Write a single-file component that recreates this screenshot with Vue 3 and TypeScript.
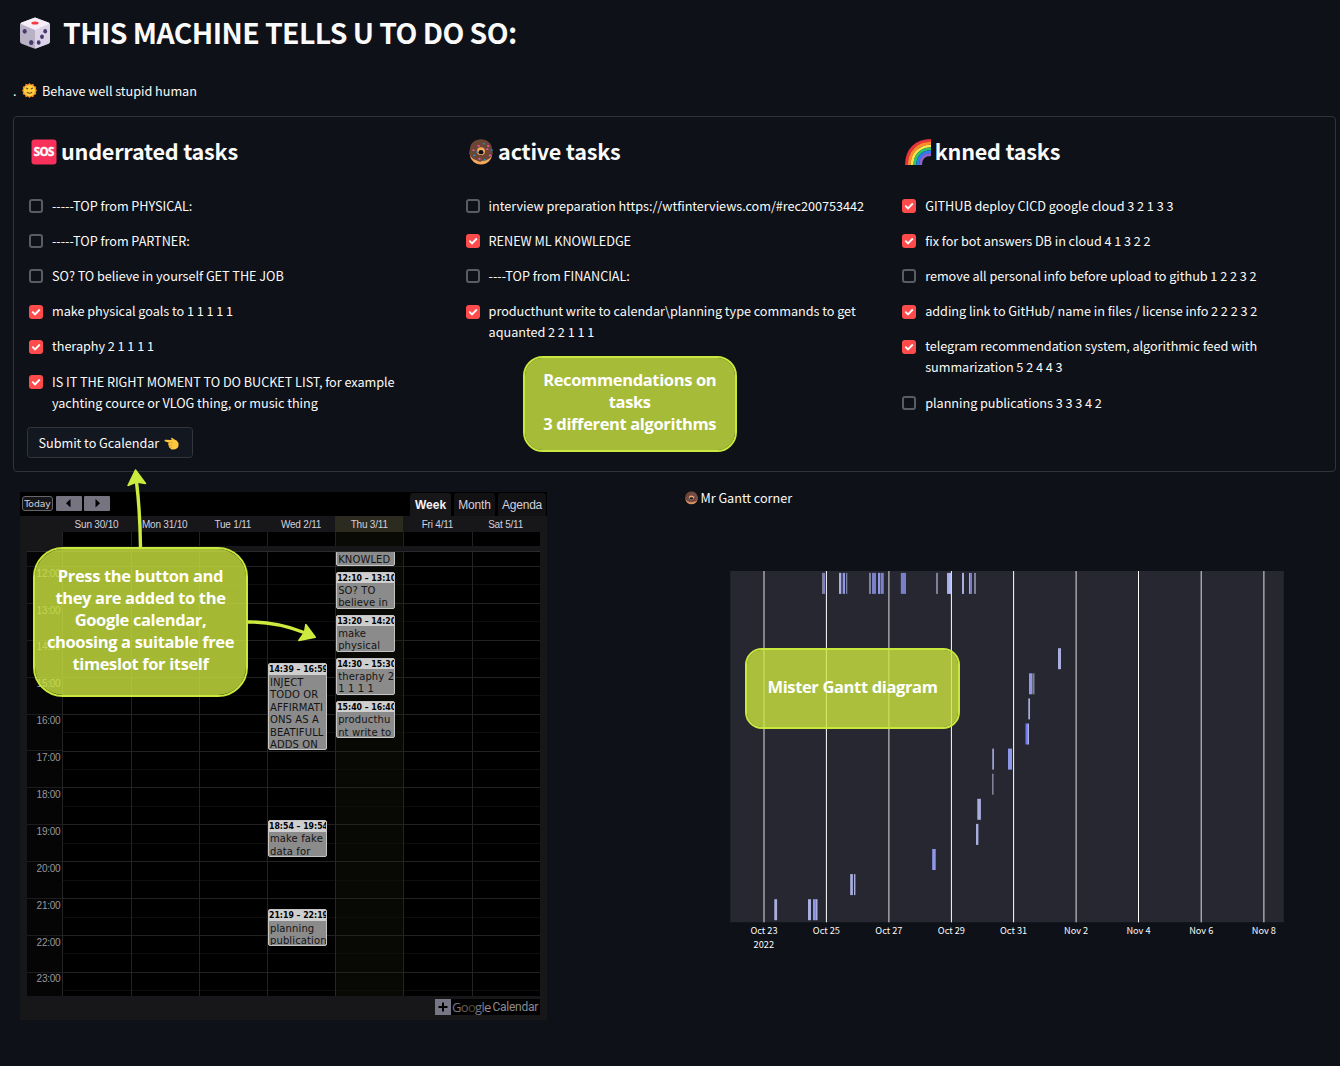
<script setup lang="ts">
interface Task { text: string; done: boolean }
interface Column { icon: 'sos' | 'donut' | 'rainbow'; title: string; tasks: Task[] }
interface CalEvent { start: number; end: number; time: string; title: string }
interface Day { label: string; today?: boolean; events: CalEvent[] }

const columns: Column[] = [
  {
    icon: 'sos',
    title: 'underrated tasks',
    tasks: [
      { text: '-----TOP from PHYSICAL:', done: false },
      { text: '-----TOP from PARTNER:', done: false },
      { text: 'SO? TO believe in yourself GET THE JOB', done: false },
      { text: 'make physical goals to 1 1 1 1 1', done: true },
      { text: 'theraphy 2 1 1 1 1', done: true },
      { text: 'IS IT THE RIGHT MOMENT TO DO BUCKET LIST, for example\nyachting cource or VLOG thing, or music thing', done: true },
    ],
  },
  {
    icon: 'donut',
    title: 'active tasks',
    tasks: [
      { text: 'interview preparation https://wtfinterviews.com/#rec200753442', done: false },
      { text: 'RENEW ML KNOWLEDGE', done: true },
      { text: '----TOP from FINANCIAL:', done: false },
      { text: 'producthunt write to calendar\\planning type commands to get\naquanted 2 2 1 1 1', done: true },
    ],
  },
  {
    icon: 'rainbow',
    title: 'knned tasks',
    tasks: [
      { text: 'GITHUB deploy CICD google cloud 3 2 1 3 3', done: true },
      { text: 'fix for bot answers DB in cloud 4 1 3 2 2', done: true },
      { text: 'remove all personal info before upload to github 1 2 2 3 2', done: false },
      { text: 'adding link to GitHub/ name in files / license info 2 2 2 3 2', done: true },
      { text: 'telegram recommendation system, algorithmic feed with\nsummarization 5 2 4 4 3', done: true },
      { text: 'planning publications 3 3 3 4 2', done: false },
    ],
  },
]

// Event times are minutes since midnight
const days: Day[] = [
  { label: 'Sun 30/10', events: [] },
  { label: 'Mon 31/10', events: [] },
  { label: 'Tue 1/11', events: [] },
  {
    label: 'Wed 2/11',
    events: [
      { start: 879, end: 1019, time: '14:39 – 16:59', title: 'INJECT\nTODO OR\nAFFIRMATI\nONS AS A\nBEATIFULL\nADDS ON' },
      { start: 1134, end: 1194, time: '18:54 – 19:54', title: 'make fake\ndata for' },
      { start: 1279, end: 1339, time: '21:19 – 22:19', title: 'planning\npublication' },
    ],
  },
  {
    label: 'Thu 3/11',
    today: true,
    events: [
      { start: 696, end: 720, time: '', title: 'KNOWLED' },
      { start: 730, end: 790, time: '12:10 – 13:10', title: 'SO? TO\nbelieve in' },
      { start: 800, end: 860, time: '13:20 – 14:20', title: 'make\nphysical' },
      { start: 870, end: 930, time: '14:30 – 15:30', title: 'theraphy 2\n1 1 1 1' },
      { start: 940, end: 1000, time: '15:40 – 16:40', title: 'producthu\nnt write to' },
    ],
  },
  { label: 'Fri 4/11', events: [] },
  { label: 'Sat 5/11', events: [] },
]

const HOUR = 36.9
const NOON = 14
const yOf = (m: number) => NOON + ((m - 720) / 60) * HOUR
const eventStyle = (e: CalEvent) => ({
  top: `${(yOf(e.start) - 0.4).toFixed(1)}px`,
  height: `${(yOf(e.end) - yOf(e.start) + 0.2).toFixed(1)}px`,
})
const hours = Array.from({ length: 12 }, (_, i) => `${12 + i}:00`)

const ticks = [
  { x: 34, soft: true, label: 'Oct 23' },
  { x: 96.4, soft: false, label: 'Oct 25' },
  { x: 158.9, soft: true, label: 'Oct 27' },
  { x: 221.4, soft: false, label: 'Oct 29' },
  { x: 283.6, soft: false, label: 'Oct 31' },
  { x: 346.1, soft: true, label: 'Nov 2' },
  { x: 408.5, soft: false, label: 'Nov 4' },
  { x: 471.2, soft: true, label: 'Nov 6' },
  { x: 533.9, soft: true, label: 'Nov 8' },
]

// [row, x, width, colour]
const B = '#8f97e8'
const L = '#a9aede'
const G = '#7f8198'
const M = '#7880c8'
const bars: [number, number, number, string][] = [
  [0, 92, 1.6, G], [0, 93.4, 1.4, B], [0, 109, 2.3, L], [0, 112.7, 2.3, B], [0, 116, 1.3, G],
  [0, 139, 2, G], [0, 142, 4, M], [0, 148, 2.4, B], [0, 151, 2.8, M],
  [0, 170.8, 5.2, M], [0, 206, 2, G], [0, 217, 2, L], [0, 219, 2.4, '#aeb9ff'],
  [0, 232, 2, L], [0, 239, 1.6, L], [0, 240.6, 1.4, '#6f7bf5'], [0, 244, 2, G],
  [3, 328, 3, L], [4, 299, 3, B], [4, 302.3, 2.2, G], [5, 298.3, 1.7, L],
  [6, 295.5, 1.8, '#6f7bf5'], [6, 297.3, 1.7, L], [7, 262.3, 1.6, L], [7, 278, 4, B],
  [8, 262, 1.6, G], [9, 247.3, 3.6, L], [10, 246, 2.4, L], [11, 202.2, 3.5, B],
  [12, 120.2, 2.7, L], [12, 124, 1.4, L], [13, 44.3, 2.8, L], [13, 78, 3, L], [13, 83, 2.4, B], [13, 85.4, 2.1, L],
]
const sprinkles = [
  [11, 7, 'p'], [17, 4.5, 'b'], [22, 7, 'p'], [26, 12, 'b'], [24, 18, 'p'], [18, 23, 'b'],
  [12, 22, 'p'], [6, 18, 'b'], [5, 12, 'p'], [9, 14, 'b'], [21, 11, 'p'],
] as const
</script>

<template>
  <div class="page">
    <h1 class="title">
      <svg class="dice" viewBox="0 0 32 32">
        <path d="M16 .5 29.5 5.5Q31 6 31 7.5V24q0 2-1.6 2.700L17.500 31.200Q16 32 14.500 31.200L2.600 26.700Q1 26 1 24V7.500Q1 6 2.500 5.500Z" fill="#b9b1c5" />
        <path d="M16 12.500 30.700 6.500 31 7.500V24q0 2-1.600 2.700L16 31.800Z" fill="#dcd3e8" />
        <path d="M16 .5 29.500 5.500Q31 6.300 29.500 7.200L16 13 2.500 7.200Q1 6.300 2.500 5.500Z" fill="#f6eef8" />
        <ellipse cx="16" cy="5.900" rx="3.600" ry="1.500" fill="#f23b3f" />
        <g fill="#46396b">
          <ellipse cx="5.700" cy="14.300" rx="2" ry="2.400" /><ellipse cx="12.200" cy="25.600" rx="2.200" ry="2.500" />
          <ellipse cx="26.200" cy="14.200" rx="1.900" ry="2.300" /><ellipse cx="23" cy="19.800" rx="1.900" ry="2.300" /><ellipse cx="19.700" cy="25.500" rx="1.900" ry="2.300" />
        </g>
      </svg>
      <span>THIS MACHINE TELLS U TO DO SO:</span>
    </h1>

    <p class="motto">
      <span>.</span>
      <svg class="sun" viewBox="0 0 28 28">
        <path d="M14 0l3 3 4-1.500 1.500 4L26.500 7 26 11l2 3-2 3 .5 4-4 1.500-1.500 4-4-1.500-3 3-3-3-4 1.500-1.500-4-4-1.500L2 17l-2-3 2-3-.5-4 4-1.500L7 1.500 11 3Z" fill="#f98a25" />
        <circle cx="14" cy="14" r="10.500" fill="#ffcf3f" />
        <path d="M7.500 9.500l4 1.500M20.500 9.500l-4 1.500M9 17q5 4.500 10 0" fill="none" stroke="#6c4420" stroke-width="2" />
      </svg>
      <span>Behave well stupid human</span>
    </p>

    <form class="board" @submit.prevent>
      <div class="columns">
        <section v-for="col in columns" :key="col.title" class="column">
          <h2 :class="col.icon">
            <svg v-if="col.icon === 'sos'" class="emoji" viewBox="0 0 26 26">
              <rect x=".5" y=".5" width="25" height="25" rx="3" fill="#f8315c" />
              <text x="12.700" y="17.200" text-anchor="middle" class="sos-text">SOS</text>
            </svg>
            <svg v-else-if="col.icon === 'donut'" class="emoji" viewBox="0 0 30 30">
              <ellipse cx="15" cy="16.500" rx="13" ry="13" fill="#f3a85c" />
              <path d="M2 13C2-4 28-4 28 13 29 21 24 23 22 24 19 26 17 24 15 26 12 27 10 24 8 24 4 22 1 19 2 13Z" fill="#6d4534" />
              <ellipse cx="15" cy="14" rx="4.600" ry="4.500" fill="#f3a85c" />
              <ellipse cx="15" cy="15.200" rx="2.800" ry="2.500" fill="#0e1117" />
              <rect v-for="(s, i) in sprinkles" :key="i" :x="s[0]" :y="s[1]" width="2.600" height="1.800" rx=".8" :fill="s[2] === 'p' ? '#e85ab0' : '#128fd0'" />
            </svg>
            <svg v-else class="emoji" viewBox="0 0 26 26">
              <g fill="none" stroke-width="2.900">
                <path d="M1.500 26C1.500 11 11 1.500 26 1.500" stroke="#e8343c" />
                <path d="M4.300 26C4.300 13 13 4.300 26 4.300" stroke="#ff8b2b" />
                <path d="M7.100 26C7.100 14.500 14.500 7.100 26 7.100" stroke="#ffe04d" />
                <path d="M9.900 26C9.900 16 16 9.900 26 9.900" stroke="#2fc46a" />
                <path d="M12.700 26C12.700 18 18 12.700 26 12.700" stroke="#2b7df0" />
                <path d="M15.500 26C15.500 19.500 19.500 15.500 26 15.500" stroke="#8c62c8" />
              </g>
            </svg>
            <span>{{ col.title }}</span>
          </h2>
          <div class="tasks">
            <label v-for="t in col.tasks" :key="t.text" class="task">
              <span class="box" :class="{ on: t.done }">
                <svg v-if="t.done" viewBox="0 0 14 14"><path d="M3.300 6.700 6 9.400 10.800 4.500" /></svg>
              </span>
              <span class="task-text">{{ t.text }}</span>
            </label>
          </div>
        </section>
      </div>
      <button class="submit" type="submit">
        <span>Submit to Gcalendar</span>
        <svg viewBox="0 0 30 26">
          <path d="M2 5.500Q0 7 1.500 8.500L10 11.500 8.500 13Q7.500 15 9.500 16.500 8.500 18.500 10.500 20 10.500 22.500 13 23L15 25Q22 26 27 22 30 18 29 12 26 6 20 4.500 17 1 14.500 1.500 13.500 3 15.500 6Z" fill="#ffc83d" />
          <path d="M10 12Q14 10 18 12M9.500 16.500 16 17M10.500 20.300 16 21" fill="none" stroke="#e6932f" stroke-width="1.300" />
        </svg>
      </button>
    </form>

    <div class="lower">
      <section class="calendar">
        <div class="cal-bar">
          <div class="today-btn">Today</div>
          <div class="nav"><svg viewBox="0 0 26 15"><path d="M14.500 3v8.500L10 7.300Z" /></svg></div>
          <div class="nav"><svg viewBox="0 0 26 15"><path d="M11.500 3v8.500L16 7.300Z" /></svg></div>
          <div class="tabs">
            <div class="tab week">Week</div>
            <div class="tab month">Month</div>
            <div class="tab agenda">Agenda</div>
          </div>
        </div>
        <div class="day-head">
          <div v-for="d in days" :key="d.label" :class="{ today: d.today }">
            <div class="day-label">{{ d.label }}</div>
            <div class="all-day"></div>
          </div>
        </div>
        <div class="cal-grid">
          <div class="hours">
            <div v-for="h in hours" :key="h" class="hour">{{ h }}</div>
          </div>
          <div v-for="d in days" :key="d.label" class="day" :class="{ today: d.today }">
            <div v-for="e in d.events" :key="e.start" class="event" :class="{ cut: !e.time }" :style="eventStyle(e)">
              <div v-if="e.time" class="event-time">{{ e.time }}</div>
              <div class="event-title">{{ e.title }}</div>
            </div>
          </div>
        </div>
        <div class="cal-foot">
          <svg class="plus" viewBox="0 0 16 16"><rect width="16" height="16" fill="#777684" /><path d="M8 3.500v9M3.500 8h9" stroke="#000" stroke-width="2" /></svg>
          <div class="gcal"><b><i>G</i><i class="o1">o</i><i class="o2">o</i><i>g</i><i>l</i><i class="e">e</i></b><span>Calendar</span></div>
        </div>
      </section>

      <section class="gantt">
        <div class="gantt-title">
          <svg viewBox="0 0 30 30">
            <ellipse cx="15" cy="16.500" rx="14" ry="13" fill="#d9935a" />
            <path d="M1 13C1-4 29-4 29 13 29 21 24 23 22 23 19 25 17 23 15 25 12 26 10 23 8 23 4 21 1 19 1 13Z" fill="#6d4538" />
            <ellipse cx="15" cy="14" rx="6" ry="4.500" fill="#f3a85c" />
            <ellipse cx="15" cy="15.500" rx="4" ry="2.500" fill="#0e1117" />
            <rect v-for="(s, i) in sprinkles" :key="i" :x="s[0]" :y="s[1]" width="2.600" height="1.800" :fill="s[2] === 'p' ? '#b45a90' : '#4f8fb0'" />
          </svg>
          <span>Mr Gantt corner</span>
        </div>
        <svg class="plot" width="554" height="380" viewBox="0 0 554 380">
          <rect x=".3" width="553.500" height="351.300" fill="#272731" />
          <rect v-for="t in ticks" :key="t.label" :x="t.x - 0.5" y="0" width="1" height="351.300" fill="#fff" :fill-opacity="t.soft ? 0.85 : 1" />
          <rect v-for="(b, i) in bars" :key="i" :x="b[1]" :y="1.9 + b[0] * 25.1" :width="b[2]" height="21" :fill="b[3]" />
          <text v-for="t in ticks" :key="t.x" class="tick" :x="t.x" y="362.500" text-anchor="middle">{{ t.label }}</text>
          <text class="tick" x="33.800" y="376.800" text-anchor="middle">2022</text>
        </svg>
      </section>
    </div>

    <svg class="arrows" viewBox="0 0 340 240">
      <g fill="none" stroke="#cdea3f" stroke-width="3.400">
        <path d="M140.500 107.500Q140 70 136.500 42" />
        <path d="M248 182Q276 181.500 304 192.500" />
      </g>
      <path d="M135.500 30 145.500 43.500 136.500 42 128 45.500Z" fill="#cdea3f" stroke="#cdea3f" stroke-width="1.500" stroke-linejoin="round" />
      <path d="M315.300 197.200 305.800 184.500 304.500 192.500 298.800 200.500Z" fill="#cdea3f" stroke="#cdea3f" stroke-width="1.500" stroke-linejoin="round" />
    </svg>
    <div class="callout press">Press the button and<br />they are added to the<br />Google calendar,<br />choosing a suitable free<br />timeslot for itself</div>
    <div class="callout reco">Recommendations on<br />tasks<br />3 different algorithms</div>
    <div class="callout mister">Mister Gantt diagram</div>
  </div>
</template>

<style>
body { margin: 0; background: #0e1117; }
</style>

<style scoped>
* { box-sizing: border-box; }
.page {
  position: relative;
  width: 1340px;
  height: 1066px;
  overflow: hidden;
  background: #0e1117;
  color: #fafafa;
  font-family: "Noto Sans CJK SC", "Noto Sans", sans-serif;
  font-size: 12.7px;
  letter-spacing: -.05px;
  line-height: 21.1px;
}
.title {
  display: flex;
  align-items: center;
  gap: 12px;
  height: 65px;
  margin: 0;
  padding-left: 19px;
  font-size: 28.4px;
  font-weight: 700;
  letter-spacing: -.58px;
  line-height: 40px;
  white-space: nowrap;
}
.title span { margin-top: -1px; }
.dice { width: 32px; height: 32px; }
.motto {
  display: flex;
  align-items: center;
  height: 21px;
  margin: 15px 0 0;
  padding-left: 13px;
  white-space: nowrap;
}
.sun { width: 15px; height: 15px; margin: 0 5px 0 5.5px; }
.board {
  width: 1323px;
  height: 356px;
  margin: 15px 0 0 13px;
  padding: 14px 0 0 13px;
  border: 1px solid #31333a;
  border-radius: 4px;
}
.columns { display: grid; grid-template-columns: repeat(3, 436.6px); height: 295.5px; }
.column { padding-left: 2px; }
h2 {
  display: flex;
  align-items: center;
  height: 42px;
  margin: 0;
  font-size: 21.6px;
  font-weight: 700;
  letter-spacing: -.22px;
  line-height: 30px;
  white-space: nowrap;
}
h2 span { margin-top: -2px; }
.emoji { width: 26px; height: 26px; margin: 0 4px 0 2.5px; flex: none; }
.sos .emoji { margin: 0 4px 0 2px; }
.sos-text { font: 700 11.5px "Open Sans", sans-serif; fill: #fff; stroke: #fff; stroke-width: .4px; letter-spacing: -.6px; }
.tasks { display: flex; flex-direction: column; gap: 14.08px; padding-top: 21.7px; }
.task { display: flex; align-items: flex-start; gap: 9px; }
.task-text { white-space: pre; }
.box {
  width: 14px;
  height: 14px;
  margin-top: 4.4px;
  flex: none;
  border: 2px solid #5a5c64;
  border-radius: 3px;
}
.box.on { border: 0; background: #ff4b4b; }
.box svg { display: block; width: 14px; height: 14px; fill: none; stroke: #fff; stroke-width: 1.8; }
.submit {
  display: flex;
  align-items: center;
  gap: 4.5px;
  width: 166px;
  height: 31px;
  padding: 1px 0 0 10.5px;
  border: 1px solid #33353d;
  border-radius: 3.5px;
  background: #131720;
  color: #fafafa;
  font: inherit;
  letter-spacing: inherit;
  white-space: nowrap;
}
.submit svg { width: 15px; height: 13px; margin-top: 1px; }

.lower { display: flex; padding-top: 20px; }
.calendar {
  width: 527px;
  height: 528px;
  margin-left: 20px;
  background: #17171a;
  color: #d4d0dc;
  font-family: "Liberation Sans", sans-serif;
  letter-spacing: 0;
}
.cal-bar { display: flex; align-items: flex-start; height: 23.5px; padding-right: 1px; background: #000; }
.today-btn {
  width: 31px;
  height: 15px;
  margin: 4px 3px 0 2px;
  border: 1px solid #66666e;
  border-radius: 3px;
  background: #151518;
  font: 9.3px/14px "DejaVu Sans", sans-serif;
  letter-spacing: -.1px;
  text-align: center;
}
.nav { width: 26px; height: 15px; margin: 4px 2px 0 0; border-radius: 1px; background: #777481; }
.nav svg { display: block; width: 26px; height: 15px; fill: #000; }
.tabs { display: flex; gap: 3px; margin-left: auto; }
.tab { height: 23px; margin-top: .5px; border-radius: 3px 3px 0 0; background: #111113; font-size: 12px; line-height: 24.5px; letter-spacing: -.2px; text-align: center; }
.week { width: 41px; background: #17171a; color: #f4f2f6; letter-spacing: 0; font-weight: 700; }
.month { width: 41px; }
.agenda { width: 48px; }
.day-head { display: grid; grid-template-columns: repeat(7, 68.2px); padding-left: 42.4px; }
.day-label { height: 16.5px; font-size: 10px; letter-spacing: -.2px; line-height: 17px; text-align: center; }
.today .day-label { background: #2b2b20; }
.all-day { height: 13.5px; border-left: 1px solid #222224; background: #000; }
.today .all-day { background: #090905; }
.cal-grid {
  display: grid;
  grid-template-columns: 35.4px repeat(7, 68.2px);
  width: 513px;
  height: 444.5px;
  margin: 5.5px 0 0 7px;
  overflow: hidden;
  border-top: 1px solid #2a2a2c;
  background: #000;
}
.hours { padding-top: 14px; background: #050506; }
.hour {
  height: 36.9px;
  padding: 1.7px 2px 0 0;
  border-top: 1px solid #1c1c1e;
  color: #98969c;
  font-size: 10px;
  letter-spacing: -.25px;
  line-height: 9px;
  text-align: right;
}
.day {
  position: relative;
  border-left: 1px solid #232324;
  background: repeating-linear-gradient(to bottom, #222223 0 1px, transparent 1px 18.45px, #0e0e0e 18.45px 19.45px, transparent 19.45px 36.9px) 0 -22.9px / 100% 500px;
}
.day.today { background-color: #080804; border-color: #27271a; }
.event {
  position: absolute;
  left: 0;
  width: 59px;
  overflow: hidden;
  border: 1px solid #c4c4c4;
  border-radius: 2px;
  background: #8b8b8b;
  color: #141414;
  white-space: pre;
}
.event-time { height: 10.5px; background: #cfcfcf; color: #000; font: 700 8.7px/10px "DejaVu Sans Condensed", "DejaVu Sans", sans-serif; font-stretch: condensed; }
.event-title { padding: 1.7px 0 0 1px; font: 10px/12.5px "DejaVu Sans", sans-serif; letter-spacing: .12px; }
.cut .event-title { padding-top: 2.5px; }
.cal-foot { display: flex; align-items: center; height: 23px; padding-left: 415px; }
.plus { width: 16px; height: 16px; flex: none; }
.gcal { display: flex; align-items: center; width: 89px; height: 16px; padding-left: 1px; background: #020202; color: #8c8a90; font: 12px/16px Roboto, sans-serif; letter-spacing: -.25px; }
.gcal b { width: 40.5px; font: 13px/16px "Open Sans", sans-serif; letter-spacing: -.7px; }
.gcal i { font-style: normal; color: #77758a; }
.gcal .o1 { color: #6d5a5a; }
.gcal .o2 { color: #4f4a2c; }
.gcal .e { color: #9a8a8a; }

.gantt { padding-left: 137.5px; }
.gantt-title { display: flex; align-items: center; gap: 3px; height: 11px; white-space: nowrap; }
.gantt-title svg { width: 13px; height: 14px; }
.plot { display: block; margin: 68px 0 0 45.5px; }
.tick { fill: #fafafa; font-size: 9.2px; letter-spacing: 0; }

.arrows { position: absolute; left: 0; top: 440px; width: 340px; height: 240px; }
.callout {
  position: absolute;
  display: flex;
  align-items: center;
  justify-content: center;
  border: 2px solid #c9e83e;
  background: rgba(205, 230, 64, .8);
  background-clip: padding-box;
  color: #fff;
  font: 700 16.5px/22px "Open Sans", sans-serif;
  letter-spacing: -.36px;
  text-align: center;
  white-space: nowrap;
}
.press { left: 33px; top: 547px; width: 215px; height: 150px; padding-bottom: 4px; border-radius: 30px; }
.reco { left: 522.5px; top: 355.5px; width: 214.5px; height: 96.5px; padding-bottom: 4px; border-radius: 20px; }
.mister { left: 745px; top: 648px; width: 215px; height: 81px; padding-bottom: 4px; border-radius: 17px; }
</style>
